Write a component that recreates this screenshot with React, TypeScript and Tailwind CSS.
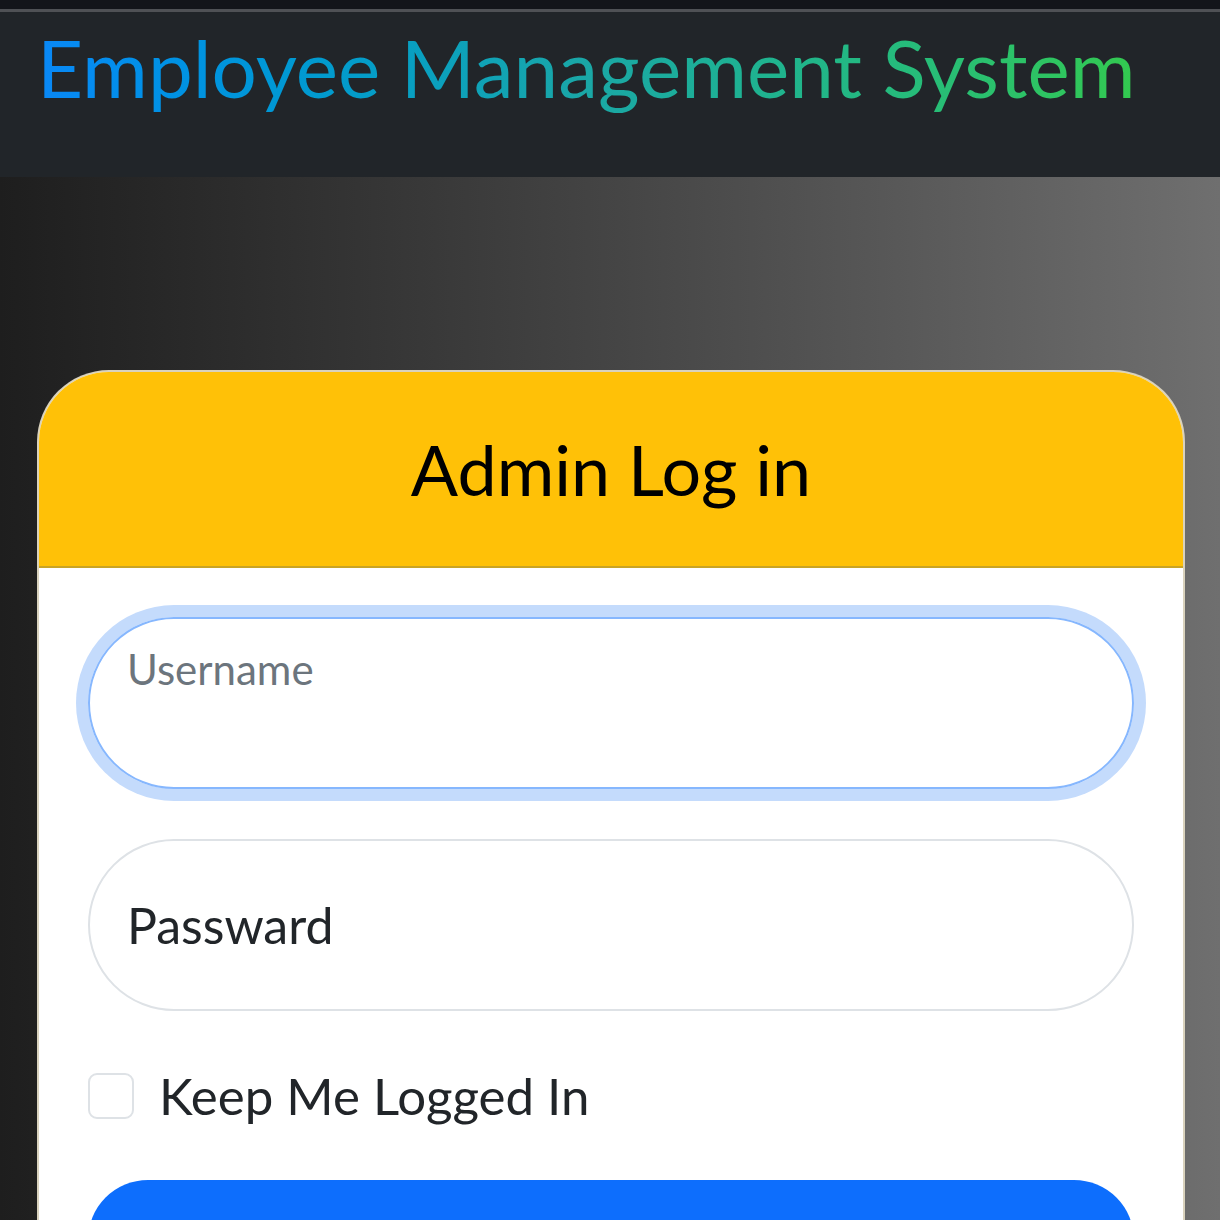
import { useState } from 'react'

export default function App() {
  const [remember, setRemember] = useState(false)

  return (
    <div className="min-h-screen bg-[#1f1f1f] font-['Lato',sans-serif]">
      {/* top strip + navbar */}
      <div className="h-[9px] bg-[#13151a]" />
      <div className="h-[3px] bg-[#4f5155]" />
      <nav className="h-[165px] bg-[#212529] px-[37px] pt-[9px]">
        <h1 className="inline-block bg-gradient-to-r from-[#0a88f7] via-[#1aa7a6] to-[#33c94f] bg-clip-text text-[80px] leading-[92px] text-transparent">
          Employee Management System
        </h1>
      </nav>

      <main className="min-h-[1043px] bg-gradient-to-r from-[#1e1e1e] to-[#6f6f6f] pl-[37px] pr-[35px] pt-[193px]">
        <div className="overflow-hidden rounded-t-[72px] border-2 border-[#d9d2bd] border-b-[#cccccc] bg-white">
          <div className="flex h-[196px] items-center justify-center border-b-2 border-[#c9a425] bg-[#ffc107]">
            <h2 className="text-[70px] text-black">Admin Log in</h2>
          </div>

          <form className="flex flex-col border-x-0 px-[49px] pt-[49px] pb-[60px] shadow-[-2px_0_0_#cccccc,2px_0_0_#cccccc]">
            <div className="h-[172px] rounded-full border-2 border-[#86b7fe] px-[37px] pt-[25px] shadow-[0_0_0_12px_#c4dbfc]">
              <input
                className="h-[50px] w-full bg-transparent text-[42px] leading-[50px] text-[#212529] outline-none placeholder:text-[#6c757d]"
                placeholder="Username"
              />
            </div>

            <div className="mt-[50px] flex h-[172px] items-center rounded-full border-2 border-[#dee2e6] px-[37px]">
              <input
                className="h-[60px] w-full bg-transparent text-[50px] leading-[60px] text-[#212529] outline-none"
                defaultValue="Passward"
              />
            </div>

            <label className="mt-[62px] flex h-[46px] items-center gap-[25px]">
              <input
                type="checkbox"
                checked={remember}
                onChange={() => setRemember(!remember)}
                className="h-[46px] w-[46px] shrink-0 appearance-none rounded-[9px] border-2 border-[#dee2e6] bg-white"
              />
              <span className="text-[51px] leading-[46px] text-[#212529]">Keep Me Logged In</span>
            </label>

            <button
              type="button"
              className="mt-[61px] h-[120px] rounded-full bg-[#0d6efd] text-[50px] leading-[60px] text-white"
            >
              Log in
            </button>
          </form>
        </div>
      </main>
    </div>
  )
}
